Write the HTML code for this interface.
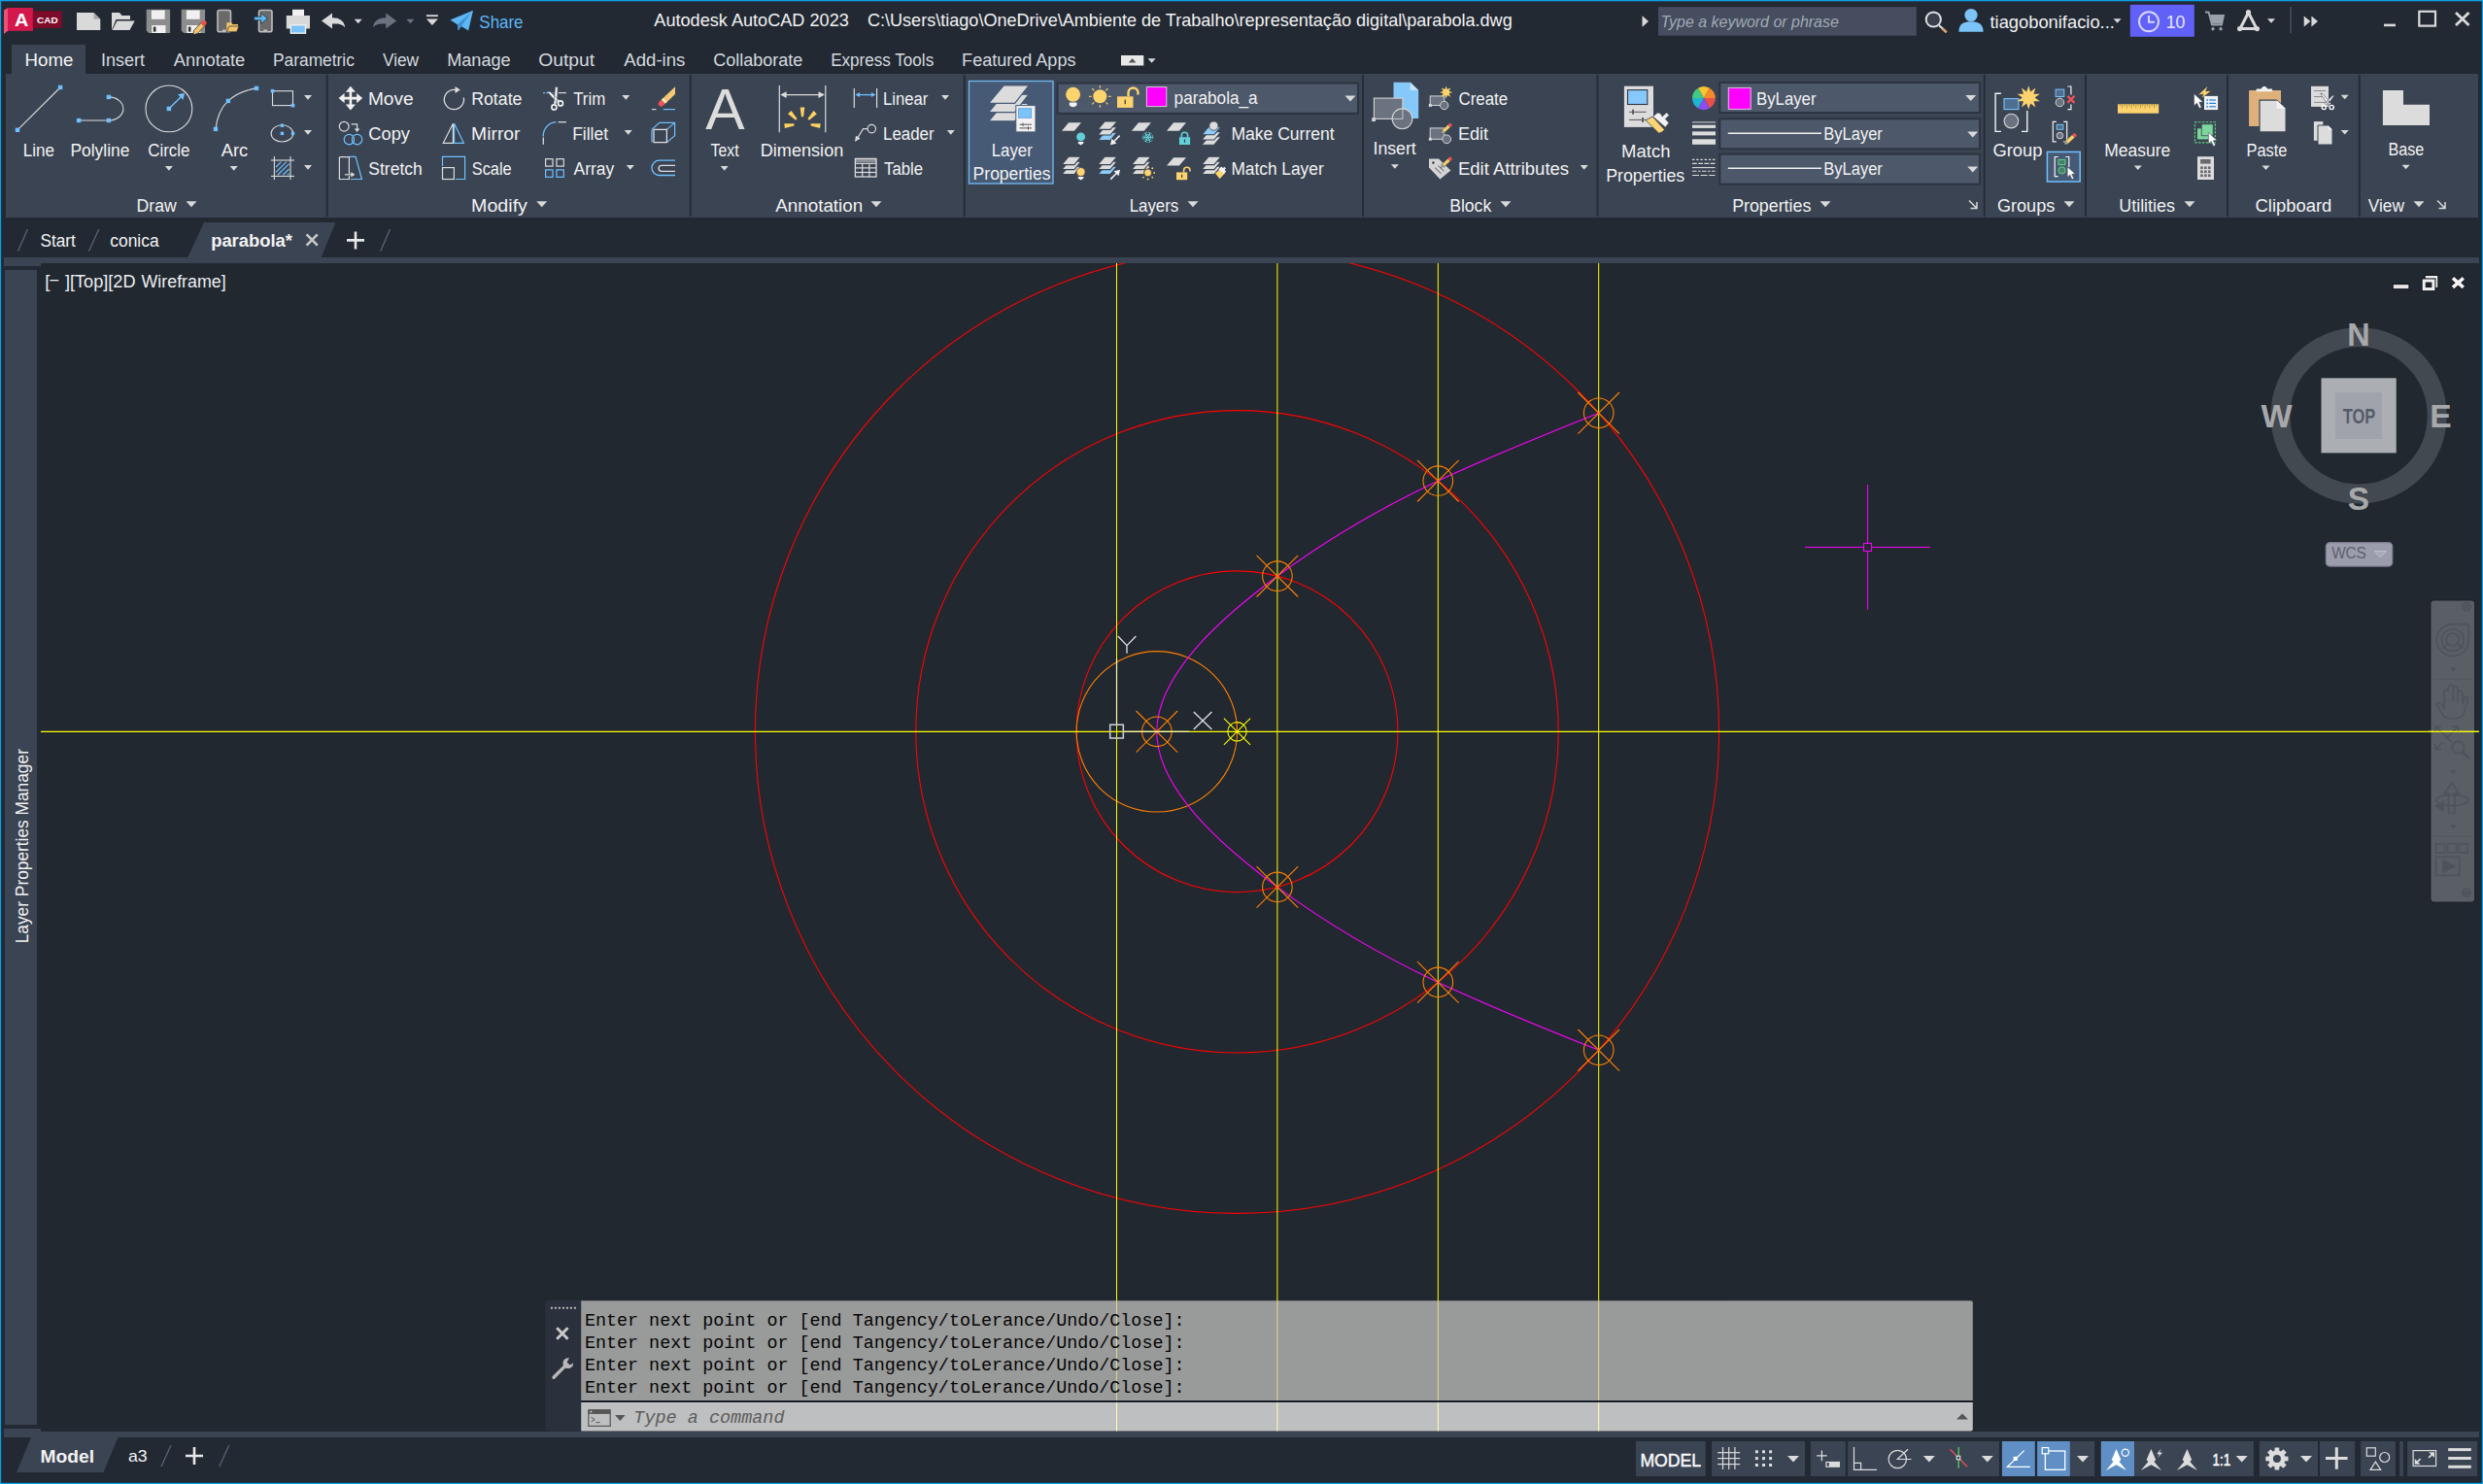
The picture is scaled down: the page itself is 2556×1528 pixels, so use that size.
<!DOCTYPE html>
<html lang="en"><head><meta charset="utf-8"><title>Autodesk AutoCAD 2023 - parabola.dwg</title>
<style>
html,body{margin:0;padding:0;background:#222933;overflow:hidden}
svg{display:block;font-family:"Liberation Sans",sans-serif}
text{white-space:pre}
</style></head><body>
<svg width="2556" height="1528" viewBox="0 0 2556 1528">
<rect x="0" y="0" width="2556" height="1528" fill="#222933" />
<rect x="42" y="271" width="2510" height="1203" fill="#212830" />
<rect x="6" y="76" width="2545" height="148" fill="#3b4453" />
<rect x="12" y="46" width="76" height="31" fill="#3b4453" />
<rect x="335.7" y="77" width="2" height="146" fill="#252c37" />
<rect x="709.8" y="77" width="2" height="146" fill="#252c37" />
<rect x="991.7" y="77" width="2" height="146" fill="#252c37" />
<rect x="1402" y="77" width="2" height="146" fill="#252c37" />
<rect x="1643.5" y="77" width="2" height="146" fill="#252c37" />
<rect x="2041.7" y="77" width="2" height="146" fill="#252c37" />
<rect x="2146" y="77" width="2" height="146" fill="#252c37" />
<rect x="2292" y="77" width="2" height="146" fill="#252c37" />
<rect x="2427.8" y="77" width="2" height="146" fill="#252c37" />
<rect x="4" y="265" width="2548" height="6" fill="#3b4453" />
<rect x="4" y="271" width="38" height="3" fill="#3b4453" />
<rect x="5" y="278" width="33" height="1189" fill="#3b4453" />
<rect x="4" y="1471" width="38" height="3" fill="#3b4453" />
<rect x="4" y="1474" width="2548" height="6" fill="#3b4453" />
<path d="M4 10.5L8.5 8V31.5L4 35z" fill="#e8517a" />
<rect x="8" y="8" width="26" height="23.8" fill="#d4184c" />
<rect x="33.8" y="11.3" width="30" height="17.6" fill="#7d0b2a" />
<text x="15.04" y="26.7" font-size="18.5" fill="#fff" textLength="14.28" lengthAdjust="spacingAndGlyphs" font-weight="bold" >A</text>
<text x="38.09" y="23.8" font-size="9.6" fill="#fff" textLength="21.54" lengthAdjust="spacingAndGlyphs" font-weight="bold" >CAD</text>
<path d="M79 13H96.5L103.3 19.8V31H79z" fill="#d9d9d9" />
<path d="M96.5 13V19.8H103.3z" fill="#a8a8a8" />
<path d="M115 31V13H123L125.5 16H134V20H119.5L115 31z" fill="#d9d9d9" />
<path d="M120.5 21.5H138.7L133.5 31H115.6z" fill="#d9d9d9" />
<path d="M150.7 9.8H175.1V34H153.2L150.7 31.5z" fill="#8d8d8d" />
<rect x="155.9" y="10.5" width="13.8" height="9.3" fill="#f0f0f0" />
<rect x="156.3" y="26" width="14.2" height="8" fill="#f0f0f0" />
<rect x="157.9" y="27.6" width="2.6" height="5" fill="#333" />
<path d="M186.7 9.8H211.1V34H189.2L186.7 31.5z" fill="#8d8d8d" />
<rect x="191.9" y="10.5" width="13.8" height="9.3" fill="#f0f0f0" />
<rect x="192.3" y="26" width="14.2" height="8" fill="#f0f0f0" />
<rect x="193.9" y="27.6" width="2.6" height="5" fill="#333" />
<path d="M199.5 31.5L207 23.5L210.5 27L203 34.8L198.8 35.6z" fill="#f2c56b" stroke="#2a2f38" stroke-width="0.8" />
<path d="M206.5 24L208.5 21.8a2.4 2.4 0 0 1 3.5 3.4L210 27.3z" fill="#e8524a" />
<rect x="224" y="10.5" width="13.5" height="22.3" fill="#6a6a6a" stroke="#bdbdbd" stroke-width="1.6" rx="2" />
<rect x="229" y="30.6" width="3.6" height="1.2" fill="#ddd" />
<path d="M233.3 32.6V23.3H238L239.5 25H245V27" fill="#f2c56b" />
<path d="M236 27H246L243.6 32.8H233.3z" fill="#f2c56b" stroke="#2a2f38" stroke-width="0.7" />
<rect x="266.5" y="10.5" width="13.5" height="22.3" fill="#6a6a6a" stroke="#bdbdbd" stroke-width="1.6" rx="2" />
<rect x="271.3" y="30.6" width="3.6" height="1.2" fill="#ddd" />
<path d="M261.6 17.2H268.8V13.6L275.4 19L268.8 24.4V20.8H261.6z" fill="#5eb6f5" stroke="#222933" stroke-width="0.7" />
<rect x="301" y="9.8" width="12" height="7" fill="#f0f0f0" />
<path d="M294.8 16H319V29.5H294.8z" fill="#d9d9d9" />
<rect x="299.3" y="25.8" width="15.2" height="8.4" fill="#7cc4f8" stroke="#f0f0f0" stroke-width="1.4" />
<path d="M331 21.5L342 13.5V18.2C349.5 18.2 354.6 21.5 355.2 28.2C352 24.6 348 24.3 342 24.5V29.5z" fill="#d9d9d9" />
<path d="M364.7 19.7h8l-4 4.6z" fill="#d9d9d9" />
<path d="M408.2 21.5L397.2 13.5V18.2C389.7 18.2 384.6 21.5 384 28.2C387.2 24.6 391.2 24.3 397.2 24.5V29.5z" fill="#6a7280" />
<path d="M418.4 19.7h8l-4 4.6z" fill="#6b7381" />
<rect x="438.9" y="15.3" width="12" height="1.8" fill="#d9d9d9" />
<path d="M438.9 19.6H450.9L444.9 26z" fill="#d9d9d9" />
<path d="M463.5 20.5L487 10.8L482.2 31.6L474.8 27L471.8 31.4L470.8 25.2L463.5 20.5z" fill="#5eb6f5" />
<path d="M470.8 25.2L484.5 13.2L474.8 27L471.8 31.4z" fill="#3c8fd0" />
<text x="493.33" y="28.9" font-size="19" fill="#5eb6f5" textLength="45.20" lengthAdjust="spacingAndGlyphs" >Share</text>
<text x="673.31" y="27" font-size="18.5" fill="#f2f2f2" textLength="200.51" lengthAdjust="spacingAndGlyphs" >Autodesk AutoCAD 2023</text>
<text x="892.93" y="27" font-size="18.5" fill="#f2f2f2" textLength="663.80" lengthAdjust="spacingAndGlyphs" >C:\Users\tiago\OneDrive\Ambiente de Trabalho\representação digital\parabola.dwg</text>
<path d="M1690.5 16.2L1697 22L1690.5 27.8z" fill="#d9d9d9" />
<rect x="1707" y="7.2" width="265.8" height="29.5" fill="#454d5f" />
<text x="1709.50" y="28" font-size="17" fill="#a2a9b4" textLength="183.33" lengthAdjust="spacingAndGlyphs" font-style="italic" >Type a keyword or phrase</text>
<circle cx="1990.3" cy="20" r="7.6" fill="#3a414d" stroke="#e0e0e0" stroke-width="2" />
<line x1="1996" y1="26" x2="2003.5" y2="33" stroke="#e0e0e0" stroke-width="2.2" />
<line x1="1999.5" y1="29.5" x2="2003.8" y2="33.4" stroke="#d9a060" stroke-width="2.4" />
<circle cx="2029" cy="15.5" r="6.6" fill="#7cc4f8" />
<path d="M2016.4 32.8C2016.4 24 2022 22.3 2029 22.3S2041.6 24 2041.6 32.8z" fill="#7cc4f8" />
<text x="2048.48" y="29" font-size="18.5" fill="#f2f2f2" textLength="128.38" lengthAdjust="spacingAndGlyphs" >tiagobonifacio...</text>
<path d="M2175.6 19.2h8l-4 4.6z" fill="#d9d9d9" />
<rect x="2192.8" y="4.8" width="66" height="33" fill="#6161f7" />
<circle cx="2212" cy="22.3" r="10" fill="none" stroke="#d6d6ff" stroke-width="2" />
<path d="M2212 16V22.8H2218" fill="none" stroke="#d6d6ff" stroke-width="2" />
<text x="2229.75" y="29.3" font-size="18.5" fill="#e6e6ff" textLength="19.75" lengthAdjust="spacingAndGlyphs" >10</text>
<path d="M2270 12.5H2273.5L2277 25.5H2287L2289 16H2275" fill="none" stroke="#9aa0aa" stroke-width="1.8" />
<path d="M2275 16H2289L2287 24.6H2277z" fill="#9aa0aa" />
<circle cx="2278" cy="29.8" r="1.7" fill="#9aa0aa" />
<circle cx="2286" cy="29.8" r="1.7" fill="#9aa0aa" />
<path d="M2314.5 13L2306 29.5H2323z" fill="none" stroke="#d9d9d9" stroke-width="3" stroke-linejoin="round"/>
<circle cx="2314.5" cy="12.6" r="2.6" fill="#d9d9d9" />
<circle cx="2305.6" cy="29.6" r="2.6" fill="#d9d9d9" />
<circle cx="2323.4" cy="29.6" r="2.6" fill="#d9d9d9" />
<path d="M2334 19.2h8l-4 4.6z" fill="#d9d9d9" />
<rect x="2357.3" y="7" width="1.4" height="27" fill="#4a5262" />
<path d="M2371.7 16.5L2378.3 22L2371.7 27.5zM2379.4 16.5L2386 22L2379.4 27.5z" fill="#d9d9d9" />
<rect x="2454" y="24.6" width="12" height="2.6" fill="#d9d9d9" />
<rect x="2490.3" y="11.8" width="16.7" height="14.8" fill="none" stroke="#d9d9d9" stroke-width="2.2" />
<path d="M2528 13L2541.5 26M2541.5 13L2528 26" fill="none" stroke="#d9d9d9" stroke-width="2.8" />
<text x="25.56" y="67.8" font-size="18" fill="#f5f5f5" textLength="49.73" lengthAdjust="spacingAndGlyphs" >Home</text>
<text x="104.04" y="67.8" font-size="18" fill="#d5d9df" textLength="45.07" lengthAdjust="spacingAndGlyphs" >Insert</text>
<text x="178.76" y="67.8" font-size="18" fill="#d5d9df" textLength="73.60" lengthAdjust="spacingAndGlyphs" >Annotate</text>
<text x="281.00" y="67.8" font-size="18" fill="#d5d9df" textLength="83.90" lengthAdjust="spacingAndGlyphs" >Parametric</text>
<text x="393.93" y="67.8" font-size="18" fill="#d5d9df" textLength="37.18" lengthAdjust="spacingAndGlyphs" >View</text>
<text x="460.18" y="67.8" font-size="18" fill="#d5d9df" textLength="65.51" lengthAdjust="spacingAndGlyphs" >Manage</text>
<text x="554.20" y="67.8" font-size="18" fill="#d5d9df" textLength="57.96" lengthAdjust="spacingAndGlyphs" >Output</text>
<text x="642.34" y="67.8" font-size="18" fill="#d5d9df" textLength="63.04" lengthAdjust="spacingAndGlyphs" >Add-ins</text>
<text x="734.18" y="67.8" font-size="18" fill="#d5d9df" textLength="92.16" lengthAdjust="spacingAndGlyphs" >Collaborate</text>
<text x="855.15" y="67.8" font-size="18" fill="#d5d9df" textLength="106.03" lengthAdjust="spacingAndGlyphs" >Express Tools</text>
<text x="990.12" y="67.8" font-size="18" fill="#d5d9df" textLength="117.37" lengthAdjust="spacingAndGlyphs" >Featured Apps</text>
<rect x="1154" y="57" width="23.3" height="10.5" fill="#e8e8e8" />
<path d="M1161.8 64.5L1165.6 60L1169.4 64.5z" fill="#555" />
<path d="M1181.6 60.2h8l-4 4.6z" fill="#d9d9d9" />
<text x="23.68" y="161" font-size="18" fill="#f2f2f2" textLength="32.32" lengthAdjust="spacingAndGlyphs" >Line</text>
<text x="72.42" y="161" font-size="18" fill="#f2f2f2" textLength="61.11" lengthAdjust="spacingAndGlyphs" >Polyline</text>
<text x="152.25" y="161" font-size="18" fill="#f2f2f2" textLength="43.27" lengthAdjust="spacingAndGlyphs" >Circle</text>
<text x="227.76" y="161" font-size="18" fill="#f2f2f2" textLength="27.51" lengthAdjust="spacingAndGlyphs" >Arc</text>
<path d="M169.9 171.1h8l-4 4.6z" fill="#d9d9d9" />
<path d="M236.7 171.1h8l-4 4.6z" fill="#d9d9d9" />
<path d="M313 98.1h8l-4 4.6z" fill="#d9d9d9" />
<path d="M313 134.1h8l-4 4.6z" fill="#d9d9d9" />
<path d="M313 170.1h8l-4 4.6z" fill="#d9d9d9" />
<text x="378.91" y="107.9" font-size="18" fill="#f2f2f2" textLength="46.80" lengthAdjust="spacingAndGlyphs" >Move</text>
<text x="379.38" y="144.3" font-size="18" fill="#f2f2f2" textLength="42.64" lengthAdjust="spacingAndGlyphs" >Copy</text>
<text x="379.35" y="180.3" font-size="18" fill="#f2f2f2" textLength="55.39" lengthAdjust="spacingAndGlyphs" >Stretch</text>
<text x="485.22" y="107.9" font-size="18" fill="#f2f2f2" textLength="52.20" lengthAdjust="spacingAndGlyphs" >Rotate</text>
<text x="485.11" y="144.3" font-size="18" fill="#f2f2f2" textLength="50.41" lengthAdjust="spacingAndGlyphs" >Mirror</text>
<text x="485.75" y="180.3" font-size="18" fill="#f2f2f2" textLength="40.92" lengthAdjust="spacingAndGlyphs" >Scale</text>
<text x="590.15" y="107.9" font-size="18" fill="#f2f2f2" textLength="33.07" lengthAdjust="spacingAndGlyphs" >Trim</text>
<text x="589.15" y="144.3" font-size="18" fill="#f2f2f2" textLength="36.87" lengthAdjust="spacingAndGlyphs" >Fillet</text>
<text x="590.54" y="180.3" font-size="18" fill="#f2f2f2" textLength="41.73" lengthAdjust="spacingAndGlyphs" >Array</text>
<path d="M640.3 98.1h8l-4 4.6z" fill="#d9d9d9" />
<path d="M642.7 134.1h8l-4 4.6z" fill="#d9d9d9" />
<path d="M644.8 170.1h8l-4 4.6z" fill="#d9d9d9" />
<text x="731.45" y="160.8" font-size="18" fill="#f2f2f2" textLength="29.18" lengthAdjust="spacingAndGlyphs" >Text</text>
<path d="M741.7 171.1h8l-4 4.6z" fill="#d9d9d9" />
<text x="782.75" y="160.8" font-size="18" fill="#f2f2f2" textLength="85.53" lengthAdjust="spacingAndGlyphs" >Dimension</text>
<text x="909.07" y="107.9" font-size="18" fill="#f2f2f2" textLength="46.22" lengthAdjust="spacingAndGlyphs" >Linear</text>
<text x="909.03" y="144.3" font-size="18" fill="#f2f2f2" textLength="52.59" lengthAdjust="spacingAndGlyphs" >Leader</text>
<text x="910.02" y="180.3" font-size="18" fill="#f2f2f2" textLength="40.07" lengthAdjust="spacingAndGlyphs" >Table</text>
<path d="M969 98.1h8l-4 4.6z" fill="#d9d9d9" />
<path d="M974.8 134.1h8l-4 4.6z" fill="#d9d9d9" />
<rect x="997.5" y="83.5" width="86.5" height="105.5" fill="#475a75" stroke="#6fb2ea" stroke-width="1.4" />
<text x="1020.67" y="160.8" font-size="18" fill="#f2f2f2" textLength="42.20" lengthAdjust="spacingAndGlyphs" >Layer</text>
<text x="1001.61" y="185.4" font-size="18" fill="#f2f2f2" textLength="79.86" lengthAdjust="spacingAndGlyphs" >Properties</text>
<rect x="1088.6" y="85.6" width="309.4" height="31.2" fill="#4d586a" stroke="#2d3441" stroke-width="2" />
<rect x="1180.4" y="89.6" width="20.4" height="20" fill="#ff00ff" stroke="#d8c8d8" stroke-width="1" />
<text x="1208.62" y="107" font-size="18" fill="#f2f2f2" textLength="86.06" lengthAdjust="spacingAndGlyphs" >parabola_a</text>
<path d="M1384.5 98.5h11l-5.5 6z" fill="#d9d9d9" />
<text x="1267.38" y="144.3" font-size="18" fill="#f2f2f2" textLength="106.30" lengthAdjust="spacingAndGlyphs" >Make Current</text>
<text x="1267.42" y="180.3" font-size="18" fill="#f2f2f2" textLength="95.25" lengthAdjust="spacingAndGlyphs" >Match Layer</text>
<text x="1413.47" y="159.3" font-size="18" fill="#f2f2f2" textLength="44.27" lengthAdjust="spacingAndGlyphs" >Insert</text>
<path d="M1431.9 169.2h8l-4 4.6z" fill="#d9d9d9" />
<text x="1501.44" y="107.9" font-size="18" fill="#f2f2f2" textLength="50.67" lengthAdjust="spacingAndGlyphs" >Create</text>
<text x="1500.97" y="144.3" font-size="18" fill="#f2f2f2" textLength="31.17" lengthAdjust="spacingAndGlyphs" >Edit</text>
<text x="1500.91" y="180.3" font-size="18" fill="#f2f2f2" textLength="114.18" lengthAdjust="spacingAndGlyphs" >Edit Attributes</text>
<path d="M1626.7 170.1h8l-4 4.6z" fill="#d9d9d9" />
<text x="1669.12" y="161.9" font-size="18" fill="#f2f2f2" textLength="50.36" lengthAdjust="spacingAndGlyphs" >Match</text>
<text x="1653.13" y="187" font-size="18" fill="#f2f2f2" textLength="81.12" lengthAdjust="spacingAndGlyphs" >Properties</text>
<rect x="1770.3" y="85" width="267.7" height="31" fill="#4d586a" stroke="#2d3441" stroke-width="2" />
<rect x="1770.3" y="122.3" width="267.7" height="31" fill="#4d586a" stroke="#2d3441" stroke-width="2" />
<rect x="1770.3" y="158.7" width="267.7" height="31" fill="#4d586a" stroke="#2d3441" stroke-width="2" />
<rect x="1779.3" y="90.4" width="22.9" height="22" fill="#ff00ff" stroke="#d8c8d8" stroke-width="1" />
<text x="1808.05" y="108.3" font-size="18" fill="#f2f2f2" textLength="61.49" lengthAdjust="spacingAndGlyphs" >ByLayer</text>
<line x1="1778.8" y1="137.3" x2="1875" y2="137.3" stroke="#f0f0f0" stroke-width="1.6" />
<text x="1877.26" y="144.1" font-size="18" fill="#f2f2f2" textLength="60.64" lengthAdjust="spacingAndGlyphs" >ByLayer</text>
<line x1="1778.8" y1="173.3" x2="1875" y2="173.3" stroke="#f0f0f0" stroke-width="1.6" />
<text x="1877.26" y="180.1" font-size="18" fill="#f2f2f2" textLength="60.64" lengthAdjust="spacingAndGlyphs" >ByLayer</text>
<path d="M2023.2 98h11l-5.5 6z" fill="#d9d9d9" />
<path d="M2025.2 135.5h11l-5.5 6z" fill="#d9d9d9" />
<path d="M2025.2 171.5h11l-5.5 6z" fill="#d9d9d9" />
<text x="2051.41" y="161.2" font-size="18" fill="#f2f2f2" textLength="50.93" lengthAdjust="spacingAndGlyphs" >Group</text>
<text x="2166.15" y="161.2" font-size="18" fill="#f2f2f2" textLength="68.15" lengthAdjust="spacingAndGlyphs" >Measure</text>
<path d="M2196.8 170.5h8l-4 4.6z" fill="#d9d9d9" />
<text x="2312.48" y="161" font-size="18" fill="#f2f2f2" textLength="41.97" lengthAdjust="spacingAndGlyphs" >Paste</text>
<path d="M2328.5 170.5h8l-4 4.6z" fill="#d9d9d9" />
<path d="M2409.7 97.7h8l-4 4.6z" fill="#d9d9d9" />
<path d="M2409.7 134h8l-4 4.6z" fill="#d9d9d9" />
<text x="2458.49" y="160.3" font-size="18" fill="#f2f2f2" textLength="36.82" lengthAdjust="spacingAndGlyphs" >Base</text>
<path d="M2472.6 169.7h8l-4 4.6z" fill="#d9d9d9" />
<text x="140.61" y="217.6" font-size="18" fill="#f2f2f2" textLength="41.19" lengthAdjust="spacingAndGlyphs" >Draw</text>
<path d="M191.5 207.3h11l-5.5 6z" fill="#d9d9d9" />
<text x="485.08" y="217.6" font-size="18" fill="#f2f2f2" textLength="57.84" lengthAdjust="spacingAndGlyphs" >Modify</text>
<path d="M552.2 207.3h11l-5.5 6z" fill="#d9d9d9" />
<text x="798.29" y="217.6" font-size="18" fill="#f2f2f2" textLength="89.85" lengthAdjust="spacingAndGlyphs" >Annotation</text>
<path d="M896.5 207.3h11l-5.5 6z" fill="#d9d9d9" />
<text x="1162.67" y="217.6" font-size="18" fill="#f2f2f2" textLength="50.61" lengthAdjust="spacingAndGlyphs" >Layers</text>
<path d="M1222.5 207.3h11l-5.5 6z" fill="#d9d9d9" />
<text x="1492.15" y="217.6" font-size="18" fill="#f2f2f2" textLength="43.10" lengthAdjust="spacingAndGlyphs" >Block</text>
<path d="M1544.5 207.3h11l-5.5 6z" fill="#d9d9d9" />
<text x="1783.13" y="217.6" font-size="18" fill="#f2f2f2" textLength="81.23" lengthAdjust="spacingAndGlyphs" >Properties</text>
<path d="M1873.5 207.3h11l-5.5 6z" fill="#d9d9d9" />
<text x="2055.93" y="217.6" font-size="18" fill="#f2f2f2" textLength="59.35" lengthAdjust="spacingAndGlyphs" >Groups</text>
<path d="M2124.5 207.3h11l-5.5 6z" fill="#d9d9d9" />
<text x="2181.26" y="217.6" font-size="18" fill="#f2f2f2" textLength="57.71" lengthAdjust="spacingAndGlyphs" >Utilities</text>
<path d="M2248.5 207.3h11l-5.5 6z" fill="#d9d9d9" />
<text x="2321.58" y="217.6" font-size="18" fill="#f2f2f2" textLength="78.78" lengthAdjust="spacingAndGlyphs" >Clipboard</text>
<text x="2437.75" y="217.6" font-size="18" fill="#f2f2f2" textLength="37.21" lengthAdjust="spacingAndGlyphs" >View</text>
<path d="M2484.5 207.3h11l-5.5 6z" fill="#d9d9d9" />
<path d="M2027 206.5L2034.5 214.0M2035 208.0V214.5H2028.5" fill="none" stroke="#d9d9d9" stroke-width="1.5" />
<path d="M2509 206.5L2516.5 214.0M2517 208.0V214.5H2510.5" fill="none" stroke="#d9d9d9" stroke-width="1.5" />
<line x1="18" y1="133.8" x2="62.1" y2="90" stroke="#dcdcdc" stroke-width="1.1" />
<rect x="15.8" y="131.6" width="4.4" height="4.4" fill="#6ec1ff" />
<rect x="59.9" y="87.8" width="4.4" height="4.4" fill="#6ec1ff" />
<path d="M81.1 124H111.9A15 12.05 0 0 0 111.9 99.9" fill="none" stroke="#dcdcdc" stroke-width="1.1" />
<rect x="78.9" y="121.8" width="4.4" height="4.4" fill="#6ec1ff" />
<rect x="109.7" y="121.8" width="4.4" height="4.4" fill="#6ec1ff" />
<rect x="109.7" y="97.7" width="4.4" height="4.4" fill="#6ec1ff" />
<circle cx="173.9" cy="111.9" r="23.9" fill="none" stroke="#dcdcdc" stroke-width="1.1" />
<line x1="173.9" y1="111.9" x2="186.5" y2="99.4" stroke="#6ec1ff" stroke-width="1.4" />
<path d="M190 95.8L188.6 102.8L183 97.2z" fill="#6ec1ff" />
<rect x="171.7" y="109.7" width="4.4" height="4.4" fill="#6ec1ff" />
<path d="M222 132.9Q224 114 234.9 103.9T264 90.9" fill="none" stroke="#dcdcdc" stroke-width="1.1" />
<rect x="219.8" y="130.7" width="4.4" height="4.4" fill="#6ec1ff" />
<rect x="232.7" y="101.7" width="4.4" height="4.4" fill="#6ec1ff" />
<rect x="261.8" y="88.7" width="4.4" height="4.4" fill="#6ec1ff" />
<rect x="280.5" y="93.7" width="21" height="14.9" fill="none" stroke="#dcdcdc" stroke-width="1.1" />
<rect x="278.7" y="91.9" width="3.6" height="3.6" fill="#6ec1ff" />
<rect x="299.7" y="106.8" width="3.6" height="3.6" fill="#6ec1ff" />
<ellipse cx="290.4" cy="137.4" rx="11.3" ry="8.6" fill="none" stroke="#dcdcdc" stroke-width="1.1" />
<rect x="288.7" y="127.5" width="3.4" height="3.4" fill="#6ec1ff" />
<rect x="288.7" y="135.7" width="3.4" height="3.4" fill="#6ec1ff" />
<rect x="299.8" y="135.7" width="3.4" height="3.4" fill="#6ec1ff" />
<g stroke="#6ec1ff" stroke-width="1.2">
<line x1="284" y1="172" x2="289.4" y2="166.6" stroke="#6ec1ff" stroke-width="1.2" />
<line x1="284" y1="177.4" x2="294.8" y2="166.6" stroke="#6ec1ff" stroke-width="1.2" />
<line x1="286" y1="180" x2="297.6" y2="168.6" stroke="#6ec1ff" stroke-width="1.2" />
<line x1="291.4" y1="180" x2="297.6" y2="174" stroke="#6ec1ff" stroke-width="1.2" />
<line x1="296" y1="180" x2="297.6" y2="178.6" stroke="#6ec1ff" stroke-width="1.2" />
</g>
<line x1="282.4" y1="161" x2="282.4" y2="185" stroke="#dcdcdc" stroke-width="1.1" />
<line x1="299" y1="161" x2="299" y2="185" stroke="#dcdcdc" stroke-width="1.1" />
<line x1="279" y1="165" x2="303" y2="165" stroke="#dcdcdc" stroke-width="1.1" />
<line x1="279" y1="181.4" x2="303" y2="181.4" stroke="#dcdcdc" stroke-width="1.1" />
<path d="M360.9 88.7L366 94.8H362.2V99.8H367.2V96L373.2 101.1L367.2 106.2V102.4H362.2V107.4H366L360.9 113.5L355.8 107.4H359.6V102.4H354.6V106.2L348.6 101.1L354.6 96V99.8H359.6V94.8H355.8z" fill="#f0f0f0" />
<circle cx="354.2" cy="130.2" r="4.9" fill="none" stroke="#dcdcdc" stroke-width="1.2" />
<circle cx="359.4" cy="143.6" r="5.2" fill="none" stroke="#6ec1ff" stroke-width="1.2" />
<circle cx="367.6" cy="143.6" r="5.2" fill="none" stroke="#6ec1ff" stroke-width="1.2" />
<path d="M361.6 127.9H367.6V133" fill="none" stroke="#dcdcdc" stroke-width="1.2" />
<path d="M364.8 132.4H370.4L367.6 136z" fill="#dcdcdc" />
<path d="M349.4 161.7H359.4V179M359.4 181V184.5H349.4V161.7" fill="none" stroke="#dcdcdc" stroke-width="1.2" />
<path d="M360.1 161.4H366.1L372.5 184.5H360.9" fill="none" stroke="#6ec1ff" stroke-width="1.2" />
<line x1="354.9" y1="179.8" x2="362" y2="179.8" stroke="#dcdcdc" stroke-width="1.2" />
<path d="M361.4 177L365.4 179.8L361.4 182.6z" fill="#dcdcdc" />
<path d="M471.5 93.3A10.1 10.1 0 1 0 477.3 100.5" fill="none" stroke="#dcdcdc" stroke-width="1.3" />
<path d="M468.5 89L473.8 92.4L468.5 96z" fill="#dcdcdc" />
<path d="M456.2 147.3H466.4V127.2z" fill="none" stroke="#dcdcdc" stroke-width="1.2" />
<path d="M467.6 127.2V147.3H477.4z" fill="none" stroke="#6ec1ff" stroke-width="1.2" />
<path d="M455.5 171V161.4H478.6V184.5H469" fill="none" stroke="#6ec1ff" stroke-width="1.2" />
<rect x="455.5" y="172.6" width="11.9" height="11.9" fill="none" stroke="#dcdcdc" stroke-width="1.2" />
<line x1="559" y1="95.6" x2="569.5" y2="95.6" stroke="#6ec1ff" stroke-width="1.2" stroke-dasharray="2 1.2"/>
<line x1="574.7" y1="95.6" x2="582.9" y2="95.6" stroke="#dcdcdc" stroke-width="1.2" />
<path d="M562.8 94L566.4 94.4L576 103.6L573.4 105.8zM571.6 89.4H574.2L573.4 106.6L569.8 107.6z" fill="#f0f0f0" stroke="#3b4453" stroke-width="0.5" />
<circle cx="570.4" cy="110.4" r="2.5" fill="none" stroke="#f0f0f0" stroke-width="1.7" />
<circle cx="577" cy="106.4" r="2.5" fill="none" stroke="#f0f0f0" stroke-width="1.7" />
<path d="M559.3 140.6A14 14 0 0 1 572.4 125.7" fill="none" stroke="#6ec1ff" stroke-width="1.3" />
<line x1="559.3" y1="141.6" x2="559.3" y2="148.8" stroke="#dcdcdc" stroke-width="1.3" />
<line x1="574.7" y1="125.7" x2="582.9" y2="125.7" stroke="#dcdcdc" stroke-width="1.3" />
<rect x="561.6" y="163.7" width="7.4" height="7.4" fill="none" stroke="#dcdcdc" stroke-width="1.2" />
<rect x="572.9" y="163.7" width="7.4" height="7.4" fill="none" stroke="#dcdcdc" stroke-width="1.2" />
<rect x="561.6" y="174.9" width="7.4" height="7.4" fill="none" stroke="#6ec1ff" stroke-width="1.2" />
<rect x="572.9" y="174.9" width="7.4" height="7.4" fill="none" stroke="#6ec1ff" stroke-width="1.2" />
<path d="M695 89.2V97L684.5 107L680.5 103z" fill="#f7c873" />
<path d="M680.5 103L684.5 107L682.6 108.8A2.8 2.8 0 0 1 678.6 104.8z" fill="#f0545a" />
<path d="M682 101.6L686 105.6" fill="none" stroke="#fff" stroke-width="1.2" />
<line x1="671" y1="112.6" x2="675.5" y2="112.6" stroke="#dcdcdc" stroke-width="1.2" />
<line x1="682.7" y1="112.6" x2="695" y2="112.6" stroke="#6ec1ff" stroke-width="1.2" />
<path d="M671 133.4L678.8 126.4H694.6V139.6L686.4 146.6M694.6 126.4L686.4 133.4" fill="none" stroke="#6ec1ff" stroke-width="1.2" />
<line x1="671" y1="133.4" x2="671" y2="146.6" stroke="#6ec1ff" stroke-width="1.2" />
<rect x="673" y="133.4" width="13.4" height="13.2" fill="none" stroke="#dcdcdc" stroke-width="1.3" />
<path d="M695 165.2H678.6A7.65 7.65 0 0 0 678.6 180.5H695" fill="none" stroke="#6ec1ff" stroke-width="1.3" />
<path d="M695 170.4H681A2.95 2.95 0 0 0 681 176.3H695" fill="none" stroke="#dcdcdc" stroke-width="1.3" />
<text x="726.20" y="133.1" font-size="58.8" fill="#dcdcdc" textLength="40.38" lengthAdjust="spacingAndGlyphs" >A</text>
<line x1="802.3" y1="88" x2="802.3" y2="136.2" stroke="#dcdcdc" stroke-width="1.2" />
<line x1="849.8" y1="88" x2="849.8" y2="136.2" stroke="#dcdcdc" stroke-width="1.2" />
<line x1="806" y1="97.6" x2="846" y2="97.6" stroke="#dcdcdc" stroke-width="1.3" />
<path d="M803.2 97.6L809.6 94.2V101zM848.9 97.6L842.5 94.2V101z" fill="#dcdcdc" />
<path d="M823.7 110.6L824.9 120.2L827.1 120.2L828.3 110.6z" fill="#fbd160" />
<path d="M811.1 117.2L819.0 123.8L820.6 122.2L814.5 114.0z" fill="#fbd160" />
<path d="M837.5 114.0L831.4 122.2L833.0 123.8L840.9 117.2z" fill="#fbd160" />
<path d="M807.9 131.9L817.5 129.5L817.3 127.3L807.3 127.3z" fill="#fbd160" />
<path d="M844.7 127.3L834.7 127.3L834.5 129.5L844.1 131.9z" fill="#fbd160" />
<line x1="879.3" y1="91" x2="879.3" y2="110.9" stroke="#dcdcdc" stroke-width="1.2" />
<line x1="902.6" y1="91" x2="902.6" y2="110.9" stroke="#dcdcdc" stroke-width="1.2" />
<line x1="883" y1="97.6" x2="899" y2="97.6" stroke="#6ec1ff" stroke-width="1.3" />
<path d="M880.4 97.6L885 95.2V100zM901.5 97.6L896.9 95.2V100z" fill="#6ec1ff" />
<circle cx="897.3" cy="132.6" r="4.2" fill="none" stroke="#dcdcdc" stroke-width="1.2" />
<path d="M893 132.6H888.5L882.5 142.5" fill="none" stroke="#dcdcdc" stroke-width="1.2" />
<path d="M880 146L881 139.8L885.6 142.6z" fill="#dcdcdc" />
<rect x="880.4" y="163.4" width="21.6" height="18.6" fill="none" stroke="#dcdcdc" stroke-width="1.3" />
<rect x="880.4" y="163.4" width="21.6" height="3.6" fill="#dcdcdc" opacity="0.5" />
<line x1="880.4" y1="168.3" x2="902" y2="168.3" stroke="#dcdcdc" stroke-width="1.2" />
<line x1="880.4" y1="172.9" x2="902" y2="172.9" stroke="#dcdcdc" stroke-width="1.2" />
<line x1="880.4" y1="177.5" x2="902" y2="177.5" stroke="#dcdcdc" stroke-width="1.2" />
<line x1="887.7" y1="168.3" x2="887.7" y2="182" stroke="#dcdcdc" stroke-width="1.2" />
<line x1="894.9" y1="168.3" x2="894.9" y2="182" stroke="#dcdcdc" stroke-width="1.2" />
<path d="M1033.1 106.4H1059.1L1044.6 124.8H1017.8z" fill="#dcdcdc" stroke="#475a75" stroke-width="1.2" />
<path d="M1033.1 97.2H1059.1L1044.6 115.6H1017.8z" fill="#dcdcdc" stroke="#475a75" stroke-width="1.2" />
<path d="M1033.1 88H1059.1L1044.6 106.4H1017.8z" fill="#dcdcdc" stroke="#475a75" stroke-width="1.2" />
<rect x="1045.8" y="108.6" width="20.2" height="27.3" fill="#f2f2f2" stroke="#475a75" stroke-width="1" />
<rect x="1048.4" y="111.7" width="13.3" height="9.6" fill="#7cc4f8" stroke="#5a9ad8" stroke-width="0.8" />
<line x1="1049.5" y1="128.2" x2="1062" y2="128.2" stroke="#555" stroke-width="1" />
<line x1="1049.5" y1="131.9" x2="1062" y2="131.9" stroke="#555" stroke-width="1" />
<line x1="1053" y1="126.6" x2="1053" y2="129.8" stroke="#555" stroke-width="1" />
<line x1="1058.5" y1="130.3" x2="1058.5" y2="133.5" stroke="#555" stroke-width="1" />
<circle cx="1104.6" cy="97.3" r="7.5" fill="#fdd36e" />
<path d="M1100.8 105.4H1108.5V108.6Q1104.6 112 1100.8 108.6z" fill="#f2f2f2" />
<circle cx="1132.3" cy="99.3" r="7" fill="#fdd36e" />
<line x1="1140.9" y1="99.3" x2="1143.7" y2="99.3" stroke="#fdd36e" stroke-width="1.1" />
<line x1="1138.38" y1="105.381" x2="1140.36" y2="107.361" stroke="#fdd36e" stroke-width="1.1" />
<line x1="1132.3" y1="107.9" x2="1132.3" y2="110.7" stroke="#fdd36e" stroke-width="1.1" />
<line x1="1126.22" y1="105.381" x2="1124.24" y2="107.361" stroke="#fdd36e" stroke-width="1.1" />
<line x1="1123.7" y1="99.3" x2="1120.9" y2="99.3" stroke="#fdd36e" stroke-width="1.1" />
<line x1="1126.22" y1="93.2189" x2="1124.24" y2="91.239" stroke="#fdd36e" stroke-width="1.1" />
<line x1="1132.3" y1="90.7" x2="1132.3" y2="87.9" stroke="#fdd36e" stroke-width="1.1" />
<line x1="1138.38" y1="93.2189" x2="1140.36" y2="91.239" stroke="#fdd36e" stroke-width="1.1" />
<rect x="1150" y="99.3" width="16.5" height="11.6" fill="#fdd36e" />
<rect x="1157.6" y="102.6" width="1.3" height="4.6" fill="#3b4453" />
<path d="M1161.5 99.3V95.5A5 5 0 0 1 1171.5 95.5V97.5" fill="none" stroke="#fdd36e" stroke-width="2.4" />
<path d="M1100.1 126.3H1113L1105.9 134.7H1093z" fill="#dcdcdc" />
<circle cx="1112.6" cy="140.9" r="4.5" fill="#62d0d6" />
<path d="M1109.8 146H1115.4V147.4L1112.6 149.4L1109.8 147.4z" fill="#f2f2f2" />
<path d="M1137.2 136.2H1150.1L1143 144.6H1130.1z" fill="#8ccaf8" stroke="#3b4453" stroke-width="1.1" />
<path d="M1137.2 130.6H1150.1L1143 139H1130.1z" fill="#dcdcdc" stroke="#3b4453" stroke-width="1.1" />
<path d="M1137.2 125H1150.1L1143 133.4H1130.1z" fill="#dcdcdc" stroke="#3b4453" stroke-width="1.1" />
<path d="M1152.6 139.6L1146 146.2" fill="none" stroke="#f2f2f2" stroke-width="1.6" />
<path d="M1143 149.2L1144.4 142.8L1149.4 147.8z" fill="#f2f2f2" />
<path d="M1172 126.3H1184.9L1177.8 134.7H1164.9z" fill="#dcdcdc" />
<line x1="1176.4" y1="141.4" x2="1186.8" y2="141.4" stroke="#62d0d6" stroke-width="1.1" />
<line x1="1179" y1="136.897" x2="1184.2" y2="145.903" stroke="#62d0d6" stroke-width="1.1" />
<line x1="1184.2" y1="136.897" x2="1179" y2="145.903" stroke="#62d0d6" stroke-width="1.1" />
<circle cx="1181.6" cy="141.4" r="3.1" fill="none" stroke="#62d0d6" stroke-width="1" />
<circle cx="1181.6" cy="141.4" r="5.2" fill="none" stroke="#62d0d6" stroke-width="0.9" stroke-dasharray="1.6 1.1"/>
<path d="M1208.1 126.3H1221L1213.9 134.7H1201z" fill="#dcdcdc" />
<rect x="1213.9" y="141.2" width="11.2" height="7.8" fill="#62d0d6" />
<rect x="1218.9" y="143.4" width="1.2" height="3.4" fill="#3b4453" />
<path d="M1216.3 141.2V139.4A3.2 3.2 0 0 1 1222.7 139.4V141.2" fill="none" stroke="#62d0d6" stroke-width="1.6" />
<path d="M1244.1 140.8H1257L1249.9 149.2H1237z" fill="#dcdcdc" stroke="#3b4453" stroke-width="1.1" />
<path d="M1244.1 135.6H1257L1249.9 144H1237z" fill="#dcdcdc" stroke="#3b4453" stroke-width="1.1" />
<path d="M1244.1 130.4H1257L1249.9 138.8H1237z" fill="#8ccaf8" stroke="#3b4453" stroke-width="1.1" />
<circle cx="1249.4" cy="129.6" r="4.6" fill="#dcdcdc" stroke="#3b4453" stroke-width="0.8" />
<path d="M1100.1 171.2H1113L1105.9 179.6H1093z" fill="#dcdcdc" stroke="#3b4453" stroke-width="1.1" />
<path d="M1100.1 166.2H1113L1105.9 174.6H1093z" fill="#dcdcdc" stroke="#3b4453" stroke-width="1.1" />
<path d="M1100.1 161.2H1113L1105.9 169.6H1093z" fill="#dcdcdc" stroke="#3b4453" stroke-width="1.1" />
<circle cx="1112.6" cy="177" r="4.5" fill="#fdd36e" stroke="#3b4453" stroke-width="0.8" />
<path d="M1109.8 182H1115.4V183.4L1112.6 185.4L1109.8 183.4z" fill="#f2f2f2" />
<path d="M1137.2 171.2H1150.1L1143 179.6H1130.1z" fill="#8ccaf8" stroke="#3b4453" stroke-width="1.1" />
<path d="M1137.2 166.2H1150.1L1143 174.6H1130.1z" fill="#dcdcdc" stroke="#3b4453" stroke-width="1.1" />
<path d="M1137.2 161.2H1150.1L1143 169.6H1130.1z" fill="#dcdcdc" stroke="#3b4453" stroke-width="1.1" />
<path d="M1143.2 184.6L1150 177.8" fill="none" stroke="#f2f2f2" stroke-width="1.6" />
<path d="M1153 174.8L1151.6 181.2L1146.6 176.2z" fill="#f2f2f2" />
<path d="M1172 171.2H1184.9L1177.8 179.6H1164.9z" fill="#dcdcdc" stroke="#3b4453" stroke-width="1.1" />
<path d="M1172 166.2H1184.9L1177.8 174.6H1164.9z" fill="#dcdcdc" stroke="#3b4453" stroke-width="1.1" />
<path d="M1172 161.2H1184.9L1177.8 169.6H1164.9z" fill="#dcdcdc" stroke="#3b4453" stroke-width="1.1" />
<circle cx="1181.6" cy="177.9" r="4" fill="#fdd36e" stroke="#3b4453" stroke-width="1" />
<circle cx="1188.2" cy="177.9" r="0.9" fill="#fdd36e" />
<circle cx="1186.27" cy="182.567" r="0.9" fill="#fdd36e" />
<circle cx="1181.6" cy="184.5" r="0.9" fill="#fdd36e" />
<circle cx="1176.93" cy="182.567" r="0.9" fill="#fdd36e" />
<circle cx="1175" cy="177.9" r="0.9" fill="#fdd36e" />
<circle cx="1176.93" cy="173.233" r="0.9" fill="#fdd36e" />
<circle cx="1181.6" cy="171.3" r="0.9" fill="#fdd36e" />
<circle cx="1186.27" cy="173.233" r="0.9" fill="#fdd36e" />
<path d="M1208.1 162.2H1221L1213.9 170.6H1201z" fill="#dcdcdc" />
<rect x="1211" y="177.4" width="11.2" height="7.8" fill="#fdd36e" />
<rect x="1216" y="179.6" width="1.2" height="3.4" fill="#3b4453" />
<path d="M1218.6 177.4V175.4A3.2 3.2 0 0 1 1225 175.4V176.6" fill="none" stroke="#fdd36e" stroke-width="1.6" />
<path d="M1244.1 171.2H1257L1249.9 179.6H1237z" fill="#dcdcdc" stroke="#3b4453" stroke-width="1.1" />
<path d="M1244.1 166.2H1257L1249.9 174.6H1237z" fill="#dcdcdc" stroke="#3b4453" stroke-width="1.1" />
<path d="M1244.1 161.2H1257L1249.9 169.6H1237z" fill="#dcdcdc" stroke="#3b4453" stroke-width="1.1" />
<path d="M1250.6 178.6L1256.6 173L1261.4 178.2L1255.6 184.6z" fill="#fdd36e" stroke="#3b4453" stroke-width="0.8" />
<path d="M1254.4 174.2L1257.4 171.4L1259 173L1260.4 171.8L1262 173.6L1260.6 174.8L1262.2 176.6L1259.6 179.2z" fill="#f2f2f2" />
<path d="M1434.5 84.7H1451.7L1460.2 93V122H1434.5z" fill="#86c8fa" />
<path d="M1451.7 84.7V93H1460.2z" fill="#c4e4fc" />
<rect x="1414.4" y="101.1" width="29.5" height="21.3" fill="#6b7280" stroke="#d4d4d4" stroke-width="1.1" />
<circle cx="1443.5" cy="122.3" r="10.4" fill="#6b7280" stroke="#d4d4d4" stroke-width="1.1" />
<path d="M1433.2 122.4H1443.9V112" fill="none" stroke="#d4d4d4" stroke-width="0.9" />
<rect x="1412.2" y="121.2" width="3.8" height="3.8" fill="#d4d4d4" />
<rect x="1472.2" y="98.9" width="14.5" height="9.6" fill="#6b7280" stroke="#d4d4d4" stroke-width="1" />
<circle cx="1486.7" cy="108.5" r="4.2" fill="#6b7280" stroke="#d4d4d4" stroke-width="1" />
<rect x="1470.8" y="107" width="3" height="3" fill="#d4d4d4" />
<path d="M1488.6 88.5L1489.8 92.1L1493.3 90.4L1491.6 93.9L1495.2 95.1L1491.6 96.3L1493.3 99.8L1489.8 98.1L1488.6 101.7L1487.4 98.1L1483.9 99.8L1485.6 96.3L1482.0 95.1L1485.6 93.9L1483.9 90.4L1487.4 92.1z" fill="#fdd36e" />
<rect x="1472.2" y="131.9" width="14.5" height="11.4" fill="#6b7280" stroke="#d4d4d4" stroke-width="1" />
<circle cx="1489.2" cy="143.3" r="4.4" fill="#6b7280" stroke="#d4d4d4" stroke-width="1" />
<rect x="1470.8" y="141.8" width="3" height="3" fill="#d4d4d4" />
<path d="M1483.2 137.6L1486.8 136.8L1484.3 134.1z" fill="#c9c9c9" stroke="#3b4453" stroke-width="0.5" />
<path d="M1486.8 136.8L1492.9 131.1L1490.5 128.4L1484.3 134.1z" fill="#f9cf6a" stroke="#3b4453" stroke-width="0.5" />
<path d="M1492.9 131.1L1494.8 129.3Q1494.7 127.0 1492.4 126.7L1490.5 128.4z" fill="#f0545a" />
<path d="M1471 163.6H1481L1493.4 175.4L1482.4 184.6L1471 172.6z" fill="#d4d4d4" />
<circle cx="1475.4" cy="167.6" r="1.3" fill="#3b4453" />
<line x1="1477" y1="172.6" x2="1483.6" y2="178.8" stroke="#3b4453" stroke-width="0.9" />
<line x1="1480.4" y1="170.6" x2="1486.4" y2="176.2" stroke="#3b4453" stroke-width="0.9" />
<path d="M1483.2 172.4L1486.8 171.6L1484.3 168.9z" fill="#c9c9c9" stroke="#3b4453" stroke-width="0.5" />
<path d="M1486.8 171.6L1492.9 165.9L1490.5 163.2L1484.3 168.9z" fill="#f9cf6a" stroke="#3b4453" stroke-width="0.5" />
<path d="M1492.9 165.9L1494.8 164.1Q1494.7 161.8 1492.4 161.5L1490.5 163.2z" fill="#f0545a" />
<rect x="1671.9" y="88.7" width="30.1" height="42.2" fill="#dcdcdc" />
<rect x="1675.5" y="92.6" width="20.3" height="14.9" fill="#86c8fa" stroke="#2e3642" stroke-width="1.1" />
<line x1="1677" y1="115.3" x2="1694.6" y2="115.3" stroke="#555" stroke-width="1" />
<line x1="1677" y1="123.4" x2="1694.6" y2="123.4" stroke="#555" stroke-width="1" />
<line x1="1681" y1="112.8" x2="1681" y2="117.8" stroke="#555" stroke-width="1.8" />
<line x1="1691" y1="120.9" x2="1691" y2="125.9" stroke="#555" stroke-width="1.8" />
<path d="M1694.1 123.7L1701.2 120.1L1713.5 133.6Q1711 136.6 1707.6 137.2z" fill="#fbd474" stroke="#3b4453" stroke-width="0.8" />
<path d="M1701.6 120L1706.4 116L1709.6 117.1L1711.1 120.1L1715.5 116L1718.3 118.4L1714.3 122.5L1717.9 126.5L1714.3 131.1z" fill="#f2f2f2" stroke="#3b4453" stroke-width="0.6" stroke-linejoin="round"/>
<path d="M1753.9 101.1L1747.95 90.79A11.9 11.9 0 0 1 1759.85 90.79z" fill="#f7c531" />
<path d="M1753.9 101.1L1759.85 90.79A11.9 11.9 0 0 1 1765.80 101.10z" fill="#f58a2c" />
<path d="M1753.9 101.1L1765.80 101.10A11.9 11.9 0 0 1 1759.85 111.41z" fill="#e9504c" />
<path d="M1753.9 101.1L1759.85 111.41A11.9 11.9 0 0 1 1747.95 111.41z" fill="#8a4df0" />
<path d="M1753.9 101.1L1747.95 111.41A11.9 11.9 0 0 1 1742.00 101.10z" fill="#1eb4d4" />
<path d="M1753.9 101.1L1742.00 101.10A11.9 11.9 0 0 1 1747.95 90.79z" fill="#43c985" />
<rect x="1742" y="125.4" width="24" height="1" fill="#dcdcdc" />
<rect x="1742" y="128.7" width="24" height="3.2" fill="#dcdcdc" />
<rect x="1742" y="135.4" width="24" height="4" fill="#dcdcdc" />
<rect x="1742" y="143.3" width="24" height="5.5" fill="#dcdcdc" />
<line x1="1742" y1="164.4" x2="1765.5" y2="164.4" stroke="#dcdcdc" stroke-width="1.1" stroke-dasharray="2.4 1.8"/>
<line x1="1742" y1="168.4" x2="1765.5" y2="168.4" stroke="#dcdcdc" stroke-width="1.1" stroke-dasharray="4.8 1.4"/>
<line x1="1742" y1="172.6" x2="1765.5" y2="172.6" stroke="#dcdcdc" stroke-width="1.1" stroke-dasharray="30 0"/>
<line x1="1742" y1="176.3" x2="1765.5" y2="176.3" stroke="#dcdcdc" stroke-width="1.1" stroke-dasharray="4.6 1.4 2.6 1.4"/>
<line x1="1742" y1="180.5" x2="1765.5" y2="180.5" stroke="#dcdcdc" stroke-width="1.1" stroke-dasharray="7 1.6"/>
<path d="M2059.9 96.3H2054.1V135.4H2059.9" fill="none" stroke="#f2f2f2" stroke-width="1.4" />
<path d="M2086.8 114.1V135.4H2081" fill="none" stroke="#f2f2f2" stroke-width="1.4" />
<rect x="2063" y="101.6" width="14.9" height="11" fill="#4d6d91" stroke="#7cc4f8" stroke-width="1.1" />
<circle cx="2070.4" cy="124.6" r="7.3" fill="#6b7280" stroke="#d4d4d4" stroke-width="1.1" />
<path d="M2088.2 88.3L2090.2 94.4L2095.4 90.6L2093.4 96.7L2099.8 96.7L2094.6 100.5L2099.8 104.3L2093.4 104.3L2095.4 110.4L2090.2 106.6L2088.2 112.7L2086.2 106.6L2081.0 110.4L2083.0 104.3L2076.6 104.3L2081.8 100.5L2076.6 96.7L2083.0 96.7L2081.0 90.6L2086.2 94.4z" fill="#fdd36e" />
<rect x="2116.1" y="92.1" width="8.7" height="7.4" fill="#4d6d91" stroke="#7cc4f8" stroke-width="1" />
<circle cx="2120.4" cy="105.4" r="4.3" fill="#6b7280" stroke="#d4d4d4" stroke-width="1" />
<path d="M2128.4 89H2131.9V97.4M2131.9 107.4V112.6H2128.4" fill="none" stroke="#f2f2f2" stroke-width="1.2" />
<path d="M2128.3 98.7L2135.5 105.9M2135.5 98.7L2128.3 105.9" fill="none" stroke="#f0545a" stroke-width="2.2" />
<path d="M2116.8 125.3H2113.3V145.9H2116.8M2124.2 125.3H2127.7V145.9H2124.2" fill="none" stroke="#f2f2f2" stroke-width="1.2" />
<rect x="2117.2" y="128.3" width="6.6" height="5" fill="#4d6d91" stroke="#7cc4f8" stroke-width="1" />
<circle cx="2120.4" cy="139.6" r="3.3" fill="#6b7280" stroke="#d4d4d4" stroke-width="1" />
<path d="M2125.0 148.9L2128.7 148.2L2126.0 145.3z" fill="#c9c9c9" stroke="#3b4453" stroke-width="0.5" />
<path d="M2128.7 148.2L2135.8 141.6L2133.1 138.7L2126.0 145.3z" fill="#f9cf6a" stroke="#3b4453" stroke-width="0.5" />
<path d="M2135.8 141.6L2137.8 139.9Q2137.5 137.4 2135.0 136.9L2133.1 138.7z" fill="#f0545a" />
<rect x="2107.4" y="156.4" width="33.8" height="30.6" fill="#475a75" stroke="#6ec1ff" stroke-width="1.5" />
<path d="M2118.7 161.5H2115.2V181.7H2118.7M2126.3 161.5H2129.8V172" fill="none" stroke="#f2f2f2" stroke-width="1.2" />
<rect x="2119" y="164.4" width="6.9" height="5.2" fill="#4a7f6d" stroke="#5fd27c" stroke-width="1" />
<circle cx="2122.5" cy="175.4" r="3.6" fill="#4a7f6d" stroke="#5fd27c" stroke-width="1" />
<path d="M2128.2 171.8l0 10.6l2.6 -2.3l2.1 4.6l1.9 -0.9l-2.1 -4.5l3.4 -0.2z" fill="#fff" stroke="#3b4453" stroke-width="0.5" />
<rect x="2180" y="107.3" width="42.2" height="9.4" fill="#fdd36e" />
<line x1="2182.34" y1="107.3" x2="2182.34" y2="109.7" stroke="#b08e3a" stroke-width="0.9" />
<line x1="2184.69" y1="107.3" x2="2184.69" y2="111.5" stroke="#b08e3a" stroke-width="0.9" />
<line x1="2187.03" y1="107.3" x2="2187.03" y2="109.7" stroke="#b08e3a" stroke-width="0.9" />
<line x1="2189.38" y1="107.3" x2="2189.38" y2="111.5" stroke="#b08e3a" stroke-width="0.9" />
<line x1="2191.72" y1="107.3" x2="2191.72" y2="109.7" stroke="#b08e3a" stroke-width="0.9" />
<line x1="2194.07" y1="107.3" x2="2194.07" y2="111.5" stroke="#b08e3a" stroke-width="0.9" />
<line x1="2196.41" y1="107.3" x2="2196.41" y2="109.7" stroke="#b08e3a" stroke-width="0.9" />
<line x1="2198.76" y1="107.3" x2="2198.76" y2="111.5" stroke="#b08e3a" stroke-width="0.9" />
<line x1="2201.1" y1="107.3" x2="2201.1" y2="109.7" stroke="#b08e3a" stroke-width="0.9" />
<line x1="2203.44" y1="107.3" x2="2203.44" y2="111.5" stroke="#b08e3a" stroke-width="0.9" />
<line x1="2205.79" y1="107.3" x2="2205.79" y2="109.7" stroke="#b08e3a" stroke-width="0.9" />
<line x1="2208.13" y1="107.3" x2="2208.13" y2="111.5" stroke="#b08e3a" stroke-width="0.9" />
<line x1="2210.48" y1="107.3" x2="2210.48" y2="109.7" stroke="#b08e3a" stroke-width="0.9" />
<line x1="2212.82" y1="107.3" x2="2212.82" y2="111.5" stroke="#b08e3a" stroke-width="0.9" />
<line x1="2215.17" y1="107.3" x2="2215.17" y2="109.7" stroke="#b08e3a" stroke-width="0.9" />
<line x1="2217.51" y1="107.3" x2="2217.51" y2="111.5" stroke="#b08e3a" stroke-width="0.9" />
<line x1="2219.86" y1="107.3" x2="2219.86" y2="109.7" stroke="#b08e3a" stroke-width="0.9" />
<path d="M2263.4 97.6L2272.4 89L2270.2 94.2L2275.6 93.8L2266.6 100.8L2268.6 96.6z" fill="#fdd36e" />
<rect x="2269" y="98.9" width="14.1" height="14.2" fill="#f2f2f2" />
<rect x="2271.4" y="102.3" width="1.6" height="1.5" fill="#1a7fe8" />
<line x1="2274.2" y1="103" x2="2281" y2="103" stroke="#1a7fe8" stroke-width="1.2" />
<rect x="2271.4" y="105.7" width="1.6" height="1.5" fill="#1a7fe8" />
<line x1="2274.2" y1="106.4" x2="2281" y2="106.4" stroke="#1a7fe8" stroke-width="1.2" />
<rect x="2271.4" y="109.1" width="1.6" height="1.5" fill="#1a7fe8" />
<line x1="2274.2" y1="109.8" x2="2281" y2="109.8" stroke="#1a7fe8" stroke-width="1.2" />
<path d="M2258.6 96.6l0 12.19l2.99 -2.645l2.415 5.29l2.185 -1.035l-2.415 -5.175l3.91 -0.23z" fill="#fff" stroke="#3b4453" stroke-width="0.5" />
<rect x="2259.4" y="125.7" width="21" height="21.2" fill="none" stroke="#5fd27c" stroke-width="1.1" stroke-dasharray="2.4 1.4"/>
<rect x="2262" y="132.4" width="11.6" height="11" fill="#7dd79c" />
<rect x="2266.2" y="127.8" width="12" height="12" fill="#7dd79c" stroke="#3b4453" stroke-width="0.8" />
<path d="M2273.4 136.4l0 11.66l2.86 -2.53l2.31 5.06l2.09 -0.99l-2.31 -4.95l3.74 -0.22z" fill="#fff" stroke="#3b4453" stroke-width="0.5" />
<rect x="2262" y="161.2" width="17" height="23.8" fill="#dcdcdc" />
<rect x="2265.1" y="164" width="10.5" height="4.6" fill="#6a6a6a" />
<rect x="2265.1" y="171.4" width="2.7" height="2.7" fill="#6a6a6a" />
<rect x="2269" y="171.4" width="2.7" height="2.7" fill="#6a6a6a" />
<rect x="2272.9" y="171.4" width="2.7" height="2.7" fill="#6a6a6a" />
<rect x="2265.1" y="175.4" width="2.7" height="2.7" fill="#6a6a6a" />
<rect x="2269" y="175.4" width="2.7" height="2.7" fill="#6a6a6a" />
<rect x="2272.9" y="175.4" width="2.7" height="2.7" fill="#6a6a6a" />
<rect x="2265.1" y="179.4" width="2.7" height="2.7" fill="#6a6a6a" />
<rect x="2269" y="179.4" width="2.7" height="2.7" fill="#6a6a6a" />
<rect x="2272.9" y="179.4" width="2.7" height="2.7" fill="#6a6a6a" />
<rect x="2315.1" y="93" width="32.9" height="37" fill="#deb17b" />
<path d="M2322.7 94.2V91.6H2327.4Q2330.9 86 2334.4 91.6H2339.1V94.2z" fill="#f2f2f2" />
<path d="M2326 103.1H2343.6L2353.1 112V135.9H2326z" fill="#dcdcdc" stroke="#3b4453" stroke-width="1.2" />
<path d="M2343.6 103.1V112H2353.1z" fill="#f2f2f2" />
<rect x="2379" y="88.8" width="18" height="21.1" fill="#dcdcdc" />
<line x1="2382" y1="93.5" x2="2394" y2="93.5" stroke="#8a8a8a" stroke-width="1" />
<line x1="2382" y1="99.5" x2="2394" y2="99.5" stroke="#8a8a8a" stroke-width="1" />
<line x1="2382" y1="105.4" x2="2394" y2="105.4" stroke="#8a8a8a" stroke-width="1" />
<path d="M2388.6 96L2391 96.6L2399.4 106.6L2397 108.6zM2403.2 98L2401 98.4L2393 106.6L2395.4 108.6z" fill="#fff" stroke="#3b4453" stroke-width="0.6" />
<circle cx="2392.3" cy="110.5" r="2.1" fill="none" stroke="#fff" stroke-width="1.4" />
<circle cx="2400.2" cy="110.5" r="2.1" fill="none" stroke="#fff" stroke-width="1.4" />
<rect x="2381.9" y="125.1" width="9.4" height="19.7" fill="#dcdcdc" />
<path d="M2386 129H2396.4L2401 133.6V149H2386z" fill="#dcdcdc" stroke="#3b4453" stroke-width="1" />
<path d="M2396.4 129V133.6H2401z" fill="#f2f2f2" />
<path d="M2452.9 93H2474V107.8H2501V129H2452.9z" fill="#dcdcdc" />
<line x1="18.6" y1="258.5" x2="28.4" y2="236" stroke="#5a6372" stroke-width="1.3" />
<text x="41.53" y="254" font-size="18" fill="#f2f2f2" textLength="36.30" lengthAdjust="spacingAndGlyphs" >Start</text>
<line x1="91.5" y1="258.5" x2="101.8" y2="236" stroke="#5a6372" stroke-width="1.3" />
<text x="113.31" y="254" font-size="18" fill="#f2f2f2" textLength="50.29" lengthAdjust="spacingAndGlyphs" >conica</text>
<path d="M193.3 265L210 229H345.4L330.7 265z" fill="#3b4453" />
<text x="217.16" y="254" font-size="18" fill="#f2f2f2" textLength="83.78" lengthAdjust="spacingAndGlyphs" font-weight="bold" >parabola*</text>
<path d="M315.6 241.4L326.8 252.6M326.8 241.4L315.6 252.6" fill="none" stroke="#c8c8c8" stroke-width="2.6" />
<path d="M357 247.4H375M366 238.4V256.4" fill="none" stroke="#e8e8e8" stroke-width="2.6" />
<line x1="391.8" y1="258.5" x2="401.5" y2="236" stroke="#5a6372" stroke-width="1.3" />
<text transform="translate(29.2,971.3) rotate(-90)" font-size="18" fill="#f2f2f2" textLength="200.2" lengthAdjust="spacingAndGlyphs">Layer Properties Manager</text>
<path d="M17 1516L32 1480H121.5L106.4 1516z" fill="#3b4453" />
<text x="41.57" y="1505.8" font-size="18" fill="#f2f2f2" textLength="55.54" lengthAdjust="spacingAndGlyphs" font-weight="bold" >Model</text>
<text x="131.95" y="1505.4" font-size="17" fill="#f2f2f2" textLength="19.73" lengthAdjust="spacingAndGlyphs" >a3</text>
<line x1="166" y1="1510" x2="176" y2="1488" stroke="#5a6372" stroke-width="1.3" />
<path d="M191 1499H209M200 1490V1508" fill="none" stroke="#e8e8e8" stroke-width="2.6" />
<line x1="225.8" y1="1510" x2="235.8" y2="1488" stroke="#5a6372" stroke-width="1.3" />
<clipPath id="vp"><rect x="42" y="271" width="2510" height="1203"/></clipPath>
<g clip-path="url(#vp)" fill="none">
<circle cx="1273.5" cy="753.3" r="165.4" fill="none" stroke="#ff0000" stroke-width="1.1" />
<circle cx="1273.5" cy="753.3" r="330.7" fill="none" stroke="#ff0000" stroke-width="1.1" />
<circle cx="1273.5" cy="753.3" r="496.1" fill="none" stroke="#ff0000" stroke-width="1.1" />
<circle cx="1190.85" cy="753.3" r="82.7" fill="none" stroke="#ff7f00" stroke-width="1.1" />
<line x1="42" y1="753.32" x2="2552" y2="753.32" stroke="#ffff00" stroke-width="1.35" />
<line x1="1149.5" y1="271" x2="1149.5" y2="1473.5" stroke="#ffff00" stroke-width="1" />
<line x1="1314.9" y1="271" x2="1314.9" y2="1473.5" stroke="#ffff00" stroke-width="1" />
<line x1="1480.3" y1="271" x2="1480.3" y2="1473.5" stroke="#ffff00" stroke-width="1" />
<line x1="1645.7" y1="271" x2="1645.7" y2="1473.5" stroke="#ffff00" stroke-width="1" />
<path d="M1645.7 425.3C1589.4 447.8 1533.0 470.3 1480.3 495.2C1423.8 521.9 1371.5 551.3 1314.9 593.2C1255.3 637.3 1190.8 695.3 1190.8 753.3C1190.8 811.3 1255.3 869.3 1314.9 913.4C1371.5 955.3 1423.8 984.7 1480.3 1011.4C1533.0 1036.3 1589.4 1058.8 1645.7 1081.3" fill="none" stroke="#ff00ff" stroke-width="1.1" />
<circle cx="1645.7" cy="425.3" r="15.3" fill="none" stroke="#ff7f00" stroke-width="1.1" />
<path d="M1624.4 404L1667 446.6M1667 404L1624.4 446.6" fill="none" stroke="#ff7f00" stroke-width="1.1" />
<circle cx="1480.3" cy="495.2" r="15.3" fill="none" stroke="#ff7f00" stroke-width="1.1" />
<path d="M1459 473.9L1501.6 516.5M1501.6 473.9L1459 516.5" fill="none" stroke="#ff7f00" stroke-width="1.1" />
<circle cx="1314.9" cy="593.2" r="15.3" fill="none" stroke="#ff7f00" stroke-width="1.1" />
<path d="M1293.6 571.9L1336.2 614.5M1336.2 571.9L1293.6 614.5" fill="none" stroke="#ff7f00" stroke-width="1.1" />
<circle cx="1190.85" cy="753.3" r="15.3" fill="none" stroke="#ff7f00" stroke-width="1.1" />
<path d="M1169.55 732L1212.15 774.6M1212.15 732L1169.55 774.6" fill="none" stroke="#ff7f00" stroke-width="1.1" />
<circle cx="1314.9" cy="913.4" r="15.3" fill="none" stroke="#ff7f00" stroke-width="1.1" />
<path d="M1293.6 892.1L1336.2 934.7M1336.2 892.1L1293.6 934.7" fill="none" stroke="#ff7f00" stroke-width="1.1" />
<circle cx="1480.3" cy="1011.4" r="15.3" fill="none" stroke="#ff7f00" stroke-width="1.1" />
<path d="M1459 990.1L1501.6 1032.7M1501.6 990.1L1459 1032.7" fill="none" stroke="#ff7f00" stroke-width="1.1" />
<circle cx="1645.7" cy="1081.3" r="15.3" fill="none" stroke="#ff7f00" stroke-width="1.1" />
<path d="M1624.4 1060L1667 1102.6M1667 1060L1624.4 1102.6" fill="none" stroke="#ff7f00" stroke-width="1.1" />
<circle cx="1273.5" cy="753.3" r="9.7" fill="none" stroke="#ffff00" stroke-width="1.1" />
<path d="M1259.9 739.7L1287.1 766.9M1287.1 739.7L1259.9 766.9" fill="none" stroke="#ffff00" stroke-width="1.1" />
<line x1="1149.5" y1="678" x2="1149.5" y2="746" stroke="#fbfba6" stroke-width="1.2" />
<line x1="1157" y1="753.3" x2="1224" y2="753.3" stroke="#fbfba6" stroke-width="1.3" />
<rect x="1142.7" y="746.2" width="13.6" height="13.8" fill="none" stroke="#c6cad2" stroke-width="1.6" />
<path d="M1150.8 655L1160 664.6L1169.4 655M1160 664.6V672.8" fill="none" stroke="#dfe2e6" stroke-width="1.3" />
<path d="M1228.8 733L1247.4 751M1247.4 733L1228.8 751" fill="none" stroke="#dfe2e6" stroke-width="1.3" />
<line x1="1858" y1="563.4" x2="1987" y2="563.4" stroke="#ff00ff" stroke-width="1" />
<line x1="1922.6" y1="499" x2="1922.6" y2="627.7" stroke="#ff00ff" stroke-width="1" />
<rect x="1918.6" y="559.4" width="8" height="8" fill="#212830" stroke="#ff00ff" stroke-width="1" />
</g>
<text x="46.30" y="295.8" font-size="18.3" fill="#eceef0" >[</text>
<text x="50.38" y="294.7" font-size="18.3" fill="#eceef0" textLength="10.52" lengthAdjust="spacingAndGlyphs" >−</text>
<text x="66.90" y="295.8" font-size="18.3" fill="#eceef0" textLength="72.61" lengthAdjust="spacingAndGlyphs" >][Top][2D</text>
<text x="145.52" y="295.8" font-size="18.3" fill="#eceef0" textLength="87.15" lengthAdjust="spacingAndGlyphs" >Wireframe]</text>
<rect x="2462.6" y="291.9" width="17.9" height="6.4" fill="#141920" />
<rect x="2463.8" y="293.1" width="15.5" height="4" fill="#e6e6e6" />
<rect x="2498.3" y="285.5" width="9.4" height="9" fill="none" stroke="#141920" stroke-width="5.2" />
<rect x="2498.3" y="285.5" width="9.4" height="9" fill="none" stroke="#f0f0f0" stroke-width="3" />
<rect x="2495.2" y="289" width="9.7" height="8.6" fill="#1c222b" stroke="#141920" stroke-width="5.2" />
<rect x="2495.2" y="289" width="9.7" height="8.6" fill="#1c222b" stroke="#f0f0f0" stroke-width="3" />
<path d="M2525 286.4L2535.8 295.8M2535.8 286.4L2525 295.8" fill="none" stroke="#1a1a20" stroke-width="5.6" />
<path d="M2525 286.4L2535.8 295.8M2535.8 286.4L2525 295.8" fill="none" stroke="#f4f4f4" stroke-width="3.6" />
<circle cx="2428.1" cy="427.9" r="80.6" fill="none" stroke="#ffffff" stroke-width="20" opacity="0.155" />
<rect x="2389.5" y="389.3" width="77.2" height="77.1" fill="#abafb3" />
<rect x="2404" y="404.1" width="47.8" height="47.9" fill="#a0a3ac" />
<text x="2411.78" y="435.8" font-size="21.6" fill="#555c67" textLength="33.58" lengthAdjust="spacingAndGlyphs" font-weight="bold" >TOP</text>
<text x="2416.25" y="355.6" font-size="32.5" fill="#a7a8aa" textLength="23.44" lengthAdjust="spacingAndGlyphs" font-weight="bold" >N</text>
<text x="2416.85" y="525.3" font-size="33" fill="#a7a8aa" textLength="22.29" lengthAdjust="spacingAndGlyphs" font-weight="bold" >S</text>
<text x="2327.60" y="440.1" font-size="33" fill="#a7a8aa" textLength="32.20" lengthAdjust="spacingAndGlyphs" font-weight="bold" >W</text>
<text x="2501.18" y="440.1" font-size="33" fill="#a7a8aa" textLength="22.38" lengthAdjust="spacingAndGlyphs" font-weight="bold" >E</text>
<rect x="2394.3" y="558.7" width="68.5" height="24.4" fill="#9b9dac" stroke="#7a7c8e" stroke-width="1.2" rx="4" />
<text x="2400.19" y="575.4" font-size="15.6" fill="#5b606c" textLength="35.55" lengthAdjust="spacingAndGlyphs" >WCS</text>
<path d="M2444.3 567.6H2456.4L2450.3 573.8z" fill="#a6a8b6" stroke="#c2c4d0" stroke-width="0.9" />
<rect x="2501.9" y="617.9" width="45.8" height="311.1" fill="#ffffff" rx="3.5" opacity="0.255" stroke="#10141a" stroke-width="1.2"/>
<g fill="none" stroke="#4e535c" stroke-width="1.6">
<circle cx="2539" cy="624.8" r="4.2" fill="none" />
<path d="M2536.6 622.4L2541.4 627.2M2541.4 622.4L2536.6 627.2" fill="none" />
<path d="M2524.8 642.6H2538.5A3 3 0 0 1 2541.3 645.6V659.1A16.5 16.5 0 1 1 2524.8 642.6z" fill="none" />
<circle cx="2524.8" cy="659.1" r="11.4" fill="none" />
<circle cx="2524.8" cy="658.4" r="6.4" fill="none" />
<path d="M2519.6 662.4L2514.2 667.6M2530 662.4L2535.4 667.6" fill="none" />
<line x1="2505" y1="699.3" x2="2545" y2="699.3" stroke="#53585f" stroke-width="1" />
<line x1="2505" y1="861.3" x2="2545" y2="861.3" stroke="#53585f" stroke-width="1" />
<path d="M2507.8 724.6Q2512 722 2516 729V712Q2518.2 708 2520.4 712V706.6Q2523 703.6 2525.4 707.4V722V708Q2527.8 705 2530.2 708.6V723V712Q2533 709.4 2535 713.4V725L2537 718Q2540 716.6 2540.4 720.4L2536 735Q2534 739.8 2527 739.8H2521Q2516.4 739.8 2513.6 734.4z" fill="none" />
<path d="M2507 747.9L2523.6 764M2507 747.9H2513.4M2507 747.9V754M2530.6 747.9L2518 760.6M2530.6 747.9H2524.4M2530.6 747.9V754M2507 771.6L2514.6 764.4M2507 771.6H2513M2507 771.6V765.6" fill="none" />
<circle cx="2530.4" cy="769.6" r="6.2" fill="none" />
<path d="M2535 774.4L2541.6 781" fill="none" stroke-width="3"/>
<ellipse cx="2524.4" cy="824" rx="16.4" ry="5.6" fill="none" />
<path d="M2520.6 837.4V817H2516.4L2523.8 806L2531.2 817H2527V837.4z" fill="none" />
<path d="M2515 825.4L2507.4 830L2515 834.6z" fill="#4e535c" />
<rect x="2507.6" y="868.7" width="9" height="9.2" fill="none" />
<rect x="2519.6" y="868.7" width="9" height="9.2" fill="none" />
<rect x="2531.3" y="868.7" width="9" height="9.2" fill="none" />
<rect x="2507.6" y="882.4" width="24.1" height="19.1" fill="none" />
<path d="M2515 886L2526.6 892L2515 898z" fill="#4e535c" />
<circle cx="2539" cy="919.3" r="4.2" fill="none" />
<path d="M2536.4 918.2H2541.6L2539 921.6z" fill="#4e535c" />
</g>
<path d="M2521.8 687.6h7l-3.5 4z" fill="#4e535c" />
<path d="M2521.8 793h7l-3.5 4z" fill="#4e535c" />
<path d="M2521.8 849.6h7l-3.5 4z" fill="#4e535c" />
<line x1="2500" y1="753.32" x2="2552" y2="753.32" stroke="#ffff00" stroke-width="1.35" />
<path d="M598 1338.8H565.3A4 4 0 0 0 561.3 1342.8V1469.6A4 4 0 0 0 565.3 1473.6H598z" fill="#2a313d" />
<path d="M598.2 1339.2H2028.8A2 2 0 0 1 2030.8 1341.2V1442.2H598.2z" fill="#cdcac8" opacity="0.7" />
<rect x="598.2" y="1442" width="1432.6" height="1.9" fill="#151b26" />
<rect x="598.2" y="1443.9" width="1432.6" height="1" fill="#ffffff" opacity="0.12" />
<rect x="598.2" y="1472.3" width="1431" height="1" fill="#ffffff" opacity="0.08" />
<path d="M598.2 1443.9H2030.8V1471.5A2 2 0 0 1 2028.8 1473.5H598.2z" fill="#fffdfb" opacity="0.71" />
<rect x="566.9" y="1345.8" width="2" height="1.8" fill="#c8c8c8" />
<rect x="570.9" y="1345.8" width="2" height="1.8" fill="#c8c8c8" />
<rect x="574.9" y="1345.8" width="2" height="1.8" fill="#c8c8c8" />
<rect x="578.9" y="1345.8" width="2" height="1.8" fill="#c8c8c8" />
<rect x="582.9" y="1345.8" width="2" height="1.8" fill="#c8c8c8" />
<rect x="586.9" y="1345.8" width="2" height="1.8" fill="#c8c8c8" />
<rect x="590.9" y="1345.8" width="2" height="1.8" fill="#c8c8c8" />
<path d="M573.2 1367.2L584.6 1378.8M584.6 1367.2L573.2 1378.8" fill="none" stroke="#cacaca" stroke-width="2.9" />
<path d="M570 1418.2L581.6 1406.6" fill="none" stroke="#b8b8b8" stroke-width="3.4" stroke-linecap="round"/>
<path d="M586 1398.4A5.4 5.4 0 1 0 590.2 1403.4L586.6 1405.6L583.6 1402.6z" fill="#b8b8b8" />
<text x="601.96" y="1364.5" font-size="19.2" fill="#050505" textLength="617.54" lengthAdjust="spacingAndGlyphs" font-family="'Liberation Mono',monospace" >Enter next point or [end Tangency/toLerance/Undo/Close]:</text>
<text x="601.96" y="1387.7" font-size="19.2" fill="#050505" textLength="617.54" lengthAdjust="spacingAndGlyphs" font-family="'Liberation Mono',monospace" >Enter next point or [end Tangency/toLerance/Undo/Close]:</text>
<text x="601.96" y="1410.7" font-size="19.2" fill="#050505" textLength="617.54" lengthAdjust="spacingAndGlyphs" font-family="'Liberation Mono',monospace" >Enter next point or [end Tangency/toLerance/Undo/Close]:</text>
<text x="601.96" y="1433.9" font-size="19.2" fill="#050505" textLength="617.54" lengthAdjust="spacingAndGlyphs" font-family="'Liberation Mono',monospace" >Enter next point or [end Tangency/toLerance/Undo/Close]:</text>
<rect x="605.8" y="1451.7" width="22.4" height="16.7" fill="none" stroke="#555" stroke-width="1.2" />
<rect x="605.8" y="1451.7" width="22.4" height="4.2" fill="#555" />
<rect x="607.6" y="1452.8" width="1.6" height="1.6" fill="#ddd" />
<path d="M608.6 1459.4L612.2 1461.6L608.6 1463.8M613.4 1464.6H617.6" fill="none" stroke="#555" stroke-width="1" />
<path d="M633.15 1456.9h10.5l-5.25 6.2z" fill="#555" />
<text x="652.35" y="1465" font-size="19.2" fill="#5c5c5c" textLength="155.16" lengthAdjust="spacingAndGlyphs" font-family="'Liberation Mono',monospace" font-style="italic" >Type a command</text>
<path d="M2014 1461.6L2020 1455.4L2026 1461.6z" fill="#555" />
<rect x="1684" y="1484" width="71.7" height="36" fill="#3b4453" />
<text x="1688.40" y="1509.5" font-size="18.8" fill="#fafafa" textLength="62.81" lengthAdjust="spacingAndGlyphs" stroke="#fafafa" stroke-width="0.45">MODEL</text>
<rect x="1762" y="1484" width="96" height="36" fill="#3b4453" />
<line x1="1773.5" y1="1490" x2="1773.5" y2="1513" stroke="#dcdcdc" stroke-width="1.2" />
<line x1="1779.7" y1="1490" x2="1779.7" y2="1513" stroke="#dcdcdc" stroke-width="1.2" />
<line x1="1785.9" y1="1490" x2="1785.9" y2="1513" stroke="#dcdcdc" stroke-width="1.2" />
<line x1="1768.1" y1="1495.7" x2="1791.2" y2="1495.7" stroke="#dcdcdc" stroke-width="1.2" />
<line x1="1768.1" y1="1501.6" x2="1791.2" y2="1501.6" stroke="#dcdcdc" stroke-width="1.2" />
<line x1="1768.1" y1="1507.6" x2="1791.2" y2="1507.6" stroke="#dcdcdc" stroke-width="1.2" />
<rect x="1806.9" y="1493.3" width="3" height="3" fill="#dcdcdc" />
<rect x="1806.9" y="1500.1" width="3" height="3" fill="#dcdcdc" />
<rect x="1806.9" y="1507" width="3" height="3" fill="#dcdcdc" />
<rect x="1814" y="1493.3" width="3" height="3" fill="#dcdcdc" />
<rect x="1814" y="1500.1" width="3" height="3" fill="#dcdcdc" />
<rect x="1814" y="1507" width="3" height="3" fill="#dcdcdc" />
<rect x="1821.1" y="1493.3" width="3" height="3" fill="#dcdcdc" />
<rect x="1821.1" y="1500.1" width="3" height="3" fill="#dcdcdc" />
<rect x="1821.1" y="1507" width="3" height="3" fill="#dcdcdc" />
<path d="M1840 1498.95h12l-6 6.5z" fill="#dcdcdc" />
<rect x="1863.8" y="1484" width="36" height="36" fill="#3b4453" />
<path d="M1870.1 1498.9H1880.7M1875.4 1493.6V1504.2" fill="none" stroke="#dcdcdc" stroke-width="1.3" />
<rect x="1879.3" y="1504.9" width="14.7" height="5.9" fill="#dcdcdc" />
<rect x="1880.6" y="1506" width="2.2" height="3.7" fill="#3b4453" />
<rect x="1902.1" y="1484" width="155.8" height="36" fill="#3b4453" />
<path d="M1908.5 1490V1513.4H1932M1908.5 1506.4H1915.6V1513.4" fill="none" stroke="#dcdcdc" stroke-width="1.2" />
<circle cx="1953.3" cy="1502.5" r="9.2" fill="none" stroke="#dcdcdc" stroke-width="1.2" />
<path d="M1964 1492.2L1953.3 1502.5H1967.5" fill="none" stroke="#dcdcdc" stroke-width="1.2" />
<path d="M1979.8 1498.95h12l-6 6.5z" fill="#dcdcdc" />
<line x1="2016.2" y1="1490" x2="2016.2" y2="1511.7" stroke="#4fd25e" stroke-width="1.3" />
<line x1="2007.4" y1="1492.2" x2="2025.1" y2="1510.3" stroke="#e8505a" stroke-width="1.3" />
<rect x="2014.2" y="1499.2" width="3.6" height="3.6" fill="#3b4453" stroke="#fff" stroke-width="0.9" />
<path d="M2039.8 1498.95h12l-6 6.5z" fill="#dcdcdc" />
<rect x="2060.9" y="1484" width="33.9" height="36" fill="#5f8fc5" />
<path d="M2083.6 1493.6L2066.4 1510.4H2089.8" fill="none" stroke="#fff" stroke-width="1.3" />
<rect x="2072.6" y="1499.8" width="4.2" height="4.2" fill="#fff" />
<rect x="2097.1" y="1484" width="33.8" height="36" fill="#5f8fc5" />
<rect x="2130.9" y="1484" width="25.2" height="36" fill="#3b4453" />
<rect x="2105.4" y="1494" width="20.3" height="19.3" fill="none" stroke="#fff" stroke-width="1.3" />
<rect x="2102.2" y="1490.6" width="6.6" height="6.2" fill="#5f8fc5" stroke="#fff" stroke-width="1.2" />
<path d="M2138 1498.95h12l-6 6.5z" fill="#dcdcdc" />
<rect x="2162.8" y="1484" width="157.1" height="36" fill="#3b4453" />
<rect x="2162.8" y="1484" width="34.2" height="36" fill="#5f8fc5" />
<path d="M2178.5 1492L2183.3 1503L2181.5 1505L2189.1 1514L2178.5 1508.2L2167.9 1514L2175.5 1505L2173.7 1503z" fill="#fff" />
<circle cx="2187.8" cy="1495.8" r="3.6" fill="none" stroke="#fff" stroke-width="1.2" />
<path d="M2214.4 1492L2219.2000000000003 1503L2217.4 1505L2225.0 1514L2214.4 1508.2L2203.8 1514L2211.4 1505L2209.6 1503z" fill="#dcdcdc" />
<path d="M2224.6 1491.4L2219.6 1497.6H2222.6L2220.4 1502L2226.6 1495.4H2223.6z" fill="#dcdcdc" stroke="#3b4453" stroke-width="0.5" />
<path d="M2251.4 1492L2256.2000000000003 1503L2254.4 1505L2262.0 1514L2251.4 1508.2L2240.8 1514L2248.4 1505L2246.6 1503z" fill="#dcdcdc" />
<text x="2277.38" y="1508.6" font-size="17" fill="#fafafa" textLength="18.76" lengthAdjust="spacingAndGlyphs" stroke="#fafafa" stroke-width="0.5">1:1</text>
<path d="M2301.7 1498.95h12l-6 6.5z" fill="#dcdcdc" />
<rect x="2325.9" y="1484" width="60.1" height="36" fill="#3b4453" />
<path d="M2355.5 1499.7L2355.5 1504.3L2352.1 1504.5L2351.5 1506.1L2353.7 1508.5L2350.4 1511.8L2348.0 1509.6L2346.4 1510.2L2346.2 1513.6L2341.6 1513.6L2341.4 1510.2L2339.8 1509.6L2337.4 1511.8L2334.1 1508.5L2336.3 1506.1L2335.7 1504.5L2332.3 1504.3L2332.3 1499.7L2335.7 1499.5L2336.3 1497.9L2334.1 1495.5L2337.4 1492.2L2339.8 1494.4L2341.4 1493.8L2341.6 1490.4L2346.2 1490.4L2346.4 1493.8L2348.0 1494.4L2350.4 1492.2L2353.7 1495.5L2351.5 1497.9L2352.1 1499.5zM2347.9 1502A4 4 0 1 0 2339.9 1502A4 4 0 1 0 2347.9 1502z" fill="#dcdcdc" fill-rule="evenodd"/>
<path d="M2368 1498.95h12l-6 6.5z" fill="#dcdcdc" />
<rect x="2388" y="1484" width="36.1" height="36" fill="#3b4453" />
<path d="M2394 1501.5H2416.6M2405.3 1490.2V1512.8" fill="none" stroke="#dcdcdc" stroke-width="3" />
<rect x="2430.1" y="1484" width="35.8" height="36" fill="#3b4453" />
<rect x="2436.3" y="1490.8" width="9" height="8.4" fill="none" stroke="#dcdcdc" stroke-width="1.2" />
<circle cx="2454.7" cy="1500.5" r="5" fill="none" stroke="#dcdcdc" stroke-width="1.2" />
<path d="M2445.4 1505.2L2450.7 1513.3H2440z" fill="none" stroke="#dcdcdc" stroke-width="1.2" />
<rect x="2470.1" y="1484" width="3.9" height="36" fill="#3b4453" />
<rect x="2478.1" y="1484" width="72.1" height="36" fill="#3b4453" />
<rect x="2484.1" y="1493.6" width="23.5" height="15.9" fill="none" stroke="#dcdcdc" stroke-width="1.2" />
<path d="M2500.2 1495.3L2506.0 1495.3L2506.0 1501.0L2503.7 1498.8L2500.7 1501.5L2499.5 1500.3L2502.5 1497.5zM2491.5 1507.8L2485.7 1507.8L2485.7 1502.1L2488.0 1504.3L2491.0 1501.6L2492.2 1502.8L2489.2 1505.6z" fill="#dcdcdc" />
<rect x="2520.2" y="1491.1" width="23.6" height="3" fill="#dcdcdc" />
<rect x="2520.2" y="1500" width="23.6" height="3" fill="#dcdcdc" />
<rect x="2520.2" y="1508.8" width="23.6" height="3" fill="#dcdcdc" />
<rect x="0" y="0" width="2556" height="1.3" fill="#0a9fe6" />
<rect x="0" y="0" width="1.15" height="1528" fill="#0a9fe6" />
<rect x="2554.8" y="0" width="1.2" height="1528" fill="#0a9fe6" />
<rect x="0" y="1526.8" width="2556" height="1.2" fill="#0a9fe6" />
</svg>
</body></html>
